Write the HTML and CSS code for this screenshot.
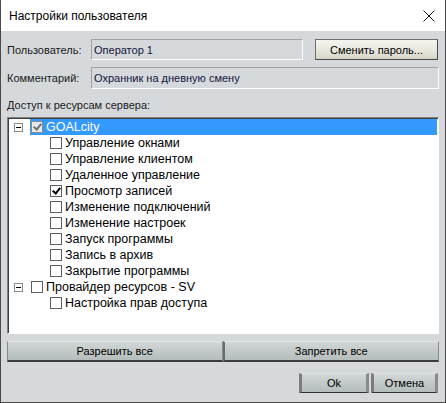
FILE: index.html
```html
<!DOCTYPE html>
<html lang="ru">
<head>
    <meta charset="UTF-8">
    <title>Настройки пользователя</title>
    <link rel="stylesheet" href="styles.css">
</head>
<body>
    <div class="window">
        <div class="titlebar">
            <span class="title">Настройки пользователя</span>
            <svg class="close" width="12" height="12" viewBox="0 0 12 12">
                <path d="M0.5 0.5 L11.5 11.5 M11.5 0.5 L0.5 11.5" stroke="#111" stroke-width="1" fill="none"/>
            </svg>
        </div>

        <div class="content">
            <div class="row">
                <span class="label">Пользователь:</span>
                <div class="field user">Оператор 1</div>
                <button class="btn-xp">Сменить пароль...</button>
            </div>
            <div class="row second">
                <span class="label">Комментарий:</span>
                <div class="field wide">Охранник на дневную смену</div>
            </div>

            <div class="caption">Доступ к ресурсам сервера:</div>

            <div class="tree">
                <div class="node">
                    <span class="toggle"></span>
                    <div class="item selected">
                        <span class="check grey on"></span>
                        <span class="text">GOALcity</span>
                    </div>
                </div>
                <div class="node child"><div class="item"><span class="check"></span><span class="text">Управление окнами</span></div></div>
                <div class="node child"><div class="item"><span class="check"></span><span class="text">Управление клиентом</span></div></div>
                <div class="node child"><div class="item"><span class="check"></span><span class="text">Удаленное управление</span></div></div>
                <div class="node child"><div class="item"><span class="check on"></span><span class="text">Просмотр записей</span></div></div>
                <div class="node child"><div class="item"><span class="check"></span><span class="text">Изменение подключений</span></div></div>
                <div class="node child"><div class="item"><span class="check"></span><span class="text">Изменение настроек</span></div></div>
                <div class="node child"><div class="item"><span class="check"></span><span class="text">Запуск программы</span></div></div>
                <div class="node child"><div class="item"><span class="check"></span><span class="text">Запись в архив</span></div></div>
                <div class="node child"><div class="item"><span class="check"></span><span class="text">Закрытие программы</span></div></div>
                <div class="node">
                    <span class="toggle"></span>
                    <div class="item">
                        <span class="check"></span>
                        <span class="text">Провайдер ресурсов - SV</span>
                    </div>
                </div>
                <div class="node child"><div class="item"><span class="check"></span><span class="text">Настройка прав доступа</span></div></div>
            </div>

            <div class="all-buttons">
                <button class="btn-flat">Разрешить все</button>
                <button class="btn-flat">Запретить все</button>
            </div>

            <div class="dialog-buttons">
                <button class="btn-dlg">Ok</button>
                <button class="btn-dlg">Отмена</button>
            </div>
        </div>
    </div>
</body>
</html>
```

FILE: styles.css
```css
body {
    margin: 0;
    font-family: "Liberation Sans", Arial, sans-serif;
    font-size: 11px;
    color: #1a1a1a;
}

.window {
    width: 446px;
    height: 403px;
    box-sizing: border-box;
    border: 1px solid #4a4a4a;
    border-top: none;
    background-color: #d5d9dc;
    display: flex;
    flex-direction: column;
}

.titlebar {
    height: 31px;
    background-color: #ffffff;
    display: flex;
    align-items: center;
    justify-content: space-between;
    padding: 0 10px 0 8px;
}

.title {
    font-size: 12px;
    color: #000;
}

.close {
    margin-top: 1px;
}

.content {
    padding: 8px 6px 0 6px;
    display: flex;
    flex-direction: column;
}

.row {
    display: flex;
    align-items: center;
    height: 21px;
}

.row.second {
    margin-top: 7px;
    height: 22px;
}

.label {
    width: 84px;
}

.field {
    height: 100%;
    box-sizing: border-box;
    border: 1px solid;
    border-color: #a2a2a2 #ffffff #ffffff #a2a2a2;
    padding-left: 2px;
    display: flex;
    align-items: center;
    color: #14143c;
}

.field.user {
    width: 212px;
}

.field.wide {
    flex: 1;
}

button {
    font-family: inherit;
    font-size: 11px;
    color: #000;
    padding: 0;
    box-sizing: border-box;
}

.btn-xp {
    margin-left: 12px;
    width: 123px;
    height: 21px;
    border: 1px solid #6e6e6e;
    border-right-color: #4a4a4a;
    border-bottom-color: #4a4a4a;
    background: linear-gradient(#f5f4ef, #e6e5dc 60%, #d6d4c6);
}

.caption {
    margin-top: 10px;
    line-height: 13px;
    height: 13px;
}

.tree {
    margin-top: 5px;
    height: 217px;
    box-sizing: border-box;
    background-color: #ffffff;
    border: 1px solid;
    border-color: #808080 #ffffff #ffffff #808080;
    box-shadow: inset 1px 1px 0 #3f3f3f;
    padding: 1px 1px 0 1px;
    font-size: 12.5px;
}

.node {
    display: flex;
    align-items: center;
    height: 16px;
    color: #000;
}

.toggle {
    margin-left: 5px;
    width: 9px;
    height: 9px;
    box-sizing: border-box;
    border: 1px solid #8c8c8c;
    position: relative;
}

.toggle::after {
    content: "";
    position: absolute;
    left: 1px;
    top: 3px;
    width: 5px;
    height: 1px;
    background-color: #000;
}

.item {
    margin-left: 7px;
    flex: 1;
    height: 16px;
    display: flex;
    align-items: center;
    padding-left: 1px;
}

.node.child .item {
    margin-left: 40px;
}

.item.selected {
    background-color: #3399ff;
    color: #ffffff;
}

.check {
    width: 12px;
    height: 12px;
    box-sizing: border-box;
    border: 1px solid #5e5e5e;
    background-color: #ffffff;
    position: relative;
    flex-shrink: 0;
}

.check.on::after {
    content: "";
    position: absolute;
    left: 3px;
    top: 0px;
    width: 3px;
    height: 6px;
    border: solid #000;
    border-width: 0 2px 2px 0;
    transform: rotate(40deg);
}

.check.grey {
    border-color: #8a8a8a;
    background-color: #e8e8e8;
}

.check.grey.on::after {
    border-color: #707070;
}

.text {
    margin-left: 3px;
    white-space: nowrap;
}

.all-buttons {
    margin-top: 7px;
    display: flex;
    height: 21px;
}

.btn-flat {
    flex: 1;
    height: 21px;
    border: 1px solid #8a8a8a;
    border-top-color: #e2e6e6;
    border-bottom: 2px solid #3c3c3c;
    background: linear-gradient(#d2d7d7, #c3c9c9 50%, #b4bcbc);
}

.btn-flat + .btn-flat {
    border-left: 2px solid #6c6c6c;
}

.dialog-buttons {
    margin-top: 11px;
    display: flex;
    justify-content: flex-end;
    gap: 2px;
    padding-right: 1px;
}

.btn-dlg {
    width: 70px;
    height: 20px;
    border: 1px solid #e0e4e4;
    border-left: 3px solid #7c7c7c;
    border-right: 3px solid #8a8a8a;
    border-bottom: 1px solid #303030;
    background: linear-gradient(#d2d7d7, #c3c9c9 50%, #b4bcbc);
}

.btn-dlg + .btn-dlg {
    width: 67px;
}
```
